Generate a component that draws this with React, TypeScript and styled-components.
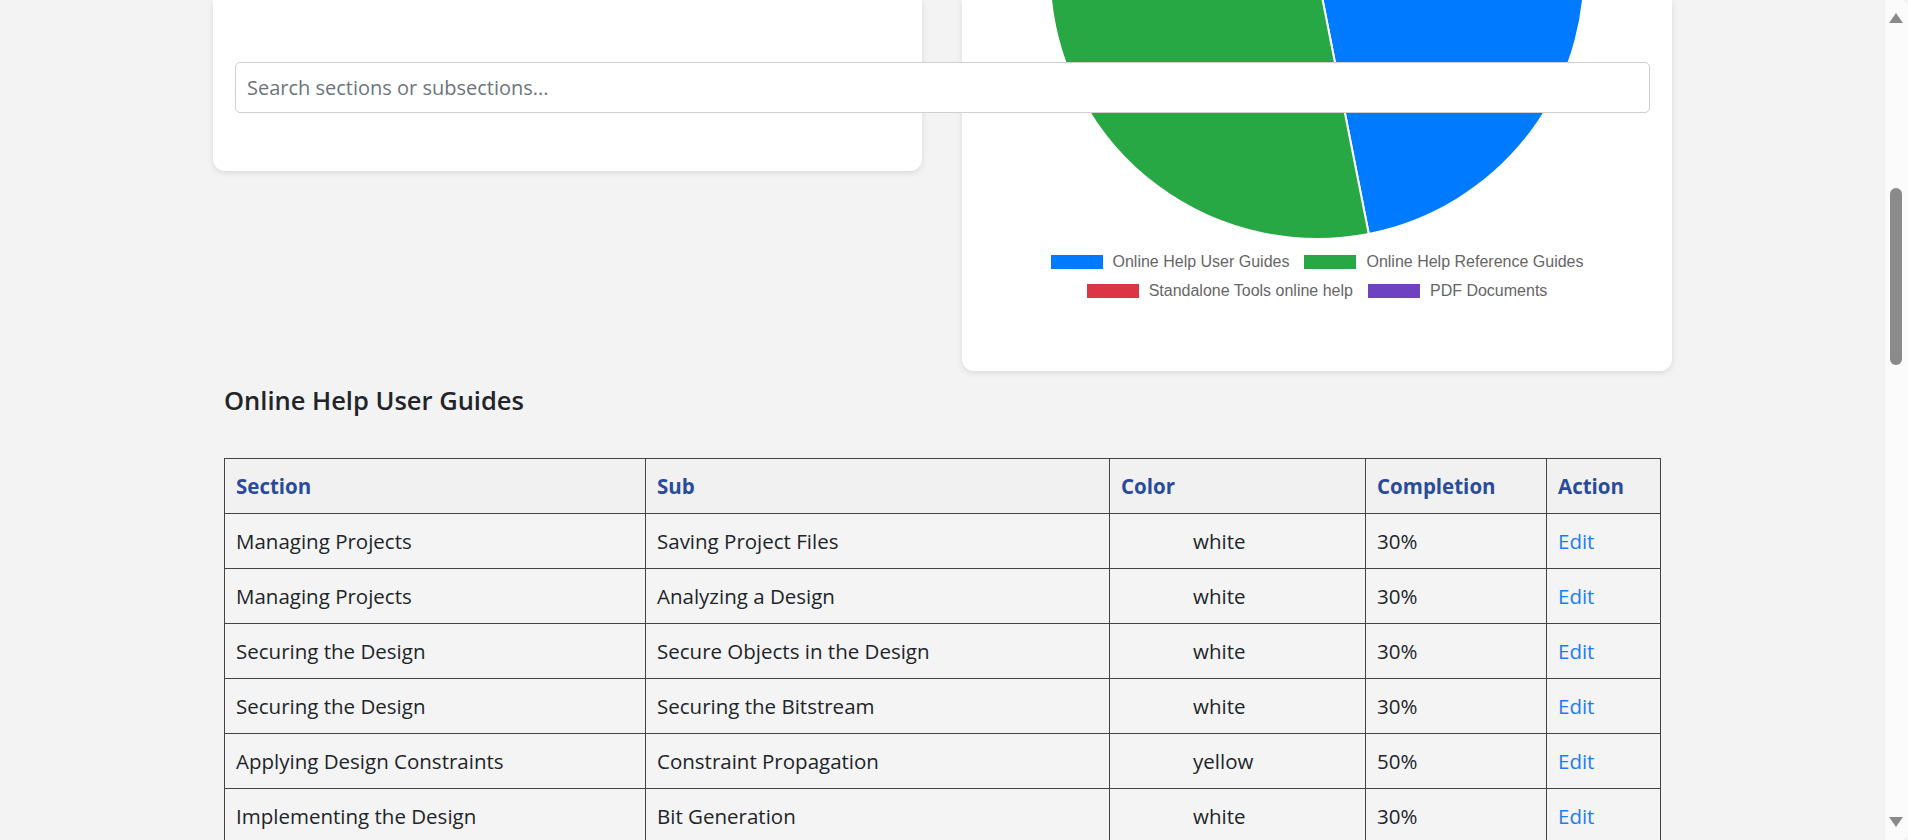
import React from "react";
import styled, { createGlobalStyle } from "styled-components";

const GlobalStyle = createGlobalStyle`
  html, body {
    margin: 0;
    padding: 0;
    overflow: hidden;
    background: #f3f3f3;
  }
  body {
    font-family: "Open Sans", "Noto Sans", sans-serif;
    color: #212529;
  }
`;

const categories = [
  { label: "Online Help User Guides", color: "#007bff", value: 46.9 },
  { label: "Online Help Reference Guides", color: "#28a745", value: 53.1 },
  { label: "Standalone Tools online help", color: "#dc3545", value: 0 },
  { label: "PDF Documents", color: "#6f42c1", value: 0 },
];

const rows = [
  { section: "Managing Projects", sub: "Saving Project Files", color: "white", completion: "30%" },
  { section: "Managing Projects", sub: "Analyzing a Design", color: "white", completion: "30%" },
  { section: "Securing the Design", sub: "Secure Objects in the Design", color: "white", completion: "30%" },
  { section: "Securing the Design", sub: "Securing the Bitstream", color: "white", completion: "30%" },
  { section: "Applying Design Constraints", sub: "Constraint Propagation", color: "yellow", completion: "50%" },
  { section: "Implementing the Design", sub: "Bit Generation", color: "white", completion: "30%" },
  { section: "Implementing the Design", sub: "Place and Route", color: "white", completion: "30%" },
];

// pie geometry (lower part of the chart, the top is scrolled away)
const CX = 268;
const CY = -28.5;
const R = 267.5;

function slicePath(startFrac: number, endFrac: number) {
  const a0 = -Math.PI / 2 + startFrac * 2 * Math.PI;
  const a1 = -Math.PI / 2 + endFrac * 2 * Math.PI;
  const x0 = CX + R * Math.cos(a0);
  const y0 = CY + R * Math.sin(a0);
  const x1 = CX + R * Math.cos(a1);
  const y1 = CY + R * Math.sin(a1);
  const large = endFrac - startFrac > 0.5 ? 1 : 0;
  return `M ${CX} ${CY} L ${x0} ${y0} A ${R} ${R} 0 ${large} 1 ${x1} ${y1} Z`;
}

function PieChart() {
  const total = categories.reduce((s, c) => s + c.value, 0);
  let acc = 0;
  return (
    <PieSvg viewBox="0 0 536 242" width="536" height="242">
      {categories
        .filter((c) => c.value > 0)
        .map((c) => {
          const start = acc / total;
          acc += c.value;
          const end = acc / total;
          return <path key={c.label} d={slicePath(start, end)} fill={c.color} stroke="#fff" strokeWidth="2" />;
        })}
    </PieSvg>
  );
}

export default function App() {
  return (
    <>
      <GlobalStyle />
      <Page>
        <Container>
          <CardsRow>
            <SearchCard>
              <SearchInput type="text" placeholder="Search sections or subsections..." />
            </SearchCard>
            <ChartCard>
              <PieChart />
              <Legend>
                <LegendRow>
                  {categories.slice(0, 2).map((c) => (
                    <LegendItem key={c.label}>
                      <LegendBox $color={c.color} />
                      {c.label}
                    </LegendItem>
                  ))}
                </LegendRow>
                <LegendRow>
                  {categories.slice(2).map((c) => (
                    <LegendItem key={c.label}>
                      <LegendBox $color={c.color} />
                      {c.label}
                    </LegendItem>
                  ))}
                </LegendRow>
              </Legend>
            </ChartCard>
          </CardsRow>

          <Section>
            <SectionTitle>Online Help User Guides</SectionTitle>
            <Table>
              <colgroup>
                <col style={{ width: 421 }} />
                <col style={{ width: 464 }} />
                <col style={{ width: 256 }} />
                <col style={{ width: 181 }} />
                <col style={{ width: 114 }} />
              </colgroup>
              <thead>
                <tr>
                  <Th>Section</Th>
                  <Th>Sub</Th>
                  <Th>Color</Th>
                  <Th>Completion</Th>
                  <Th>Action</Th>
                </tr>
              </thead>
              <tbody>
                {rows.map((r, i) => (
                  <tr key={i}>
                    <Td>{r.section}</Td>
                    <Td>{r.sub}</Td>
                    <Td>
                      <Swatch />
                      {r.color}
                    </Td>
                    <Td>{r.completion}</Td>
                    <Td>
                      <EditLink href="#">Edit</EditLink>
                    </Td>
                  </tr>
                ))}
              </tbody>
            </Table>
          </Section>
        </Container>
      </Page>
      <ScrollBar>
        <ArrowUp />
        <Thumb />
        <ArrowDown />
      </ScrollBar>
    </>
  );
}

const Page = styled.div`
  padding-right: 23px;
  min-height: 100vh;
`;

const Container = styled.div`
  width: 1459px;
  margin: 0 auto;
`;

const CardsRow = styled.div`
  display: flex;
  align-items: flex-start;
  gap: 40px;
`;

const Card = styled.div`
  flex: 0 0 709px;
  min-width: 0;
  background: #fff;
  border-radius: 0 0 12px 12px;
  box-shadow: 0 2px 6px rgba(0, 0, 0, 0.1);
  box-sizing: border-box;
`;

const SearchCard = styled(Card)`
  padding: 62px 22px 58px;
`;

const SearchInput = styled.input`
  position: relative;
  z-index: 1;
  display: block;
  width: 1415px;
  height: 51px;
  box-sizing: border-box;
  padding: 0 11px;
  font-family: "Open Sans", "Noto Sans", sans-serif;
  font-size: 20px;
  color: #212529;
  background: #fff;
  border: 1px solid #cfcfcf;
  border-radius: 5px;
  outline: none;

  &::placeholder {
    color: #6c757d;
  }
`;

const ChartCard = styled(Card)`
  flex-basis: 710px;
  display: flex;
  flex-direction: column;
  align-items: center;
  padding-bottom: 66px;
`;

const PieSvg = styled.svg`
  display: block;
  overflow: visible;
`;

const Legend = styled.div`
  margin-top: 5px;
  display: flex;
  flex-direction: column;
  align-items: center;
`;

const LegendRow = styled.div`
  display: flex;
  gap: 15px;
  height: 29px;
  align-items: center;
`;

const LegendItem = styled.div`
  display: flex;
  align-items: center;
  gap: 10px;
  font-family: "Liberation Sans", Arial, sans-serif;
  font-size: 16px;
  color: #666;
`;

const LegendBox = styled.span<{ $color: string }>`
  display: inline-block;
  width: 52px;
  height: 14px;
  background: ${(p) => p.$color};
`;

const Section = styled.div`
  padding: 0 11px;
`;

const SectionTitle = styled.h2`
  margin: 14px 0 43px;
  font-size: 25.5px;
  font-weight: 600;
  line-height: 30px;
  color: #212529;
`;

const Table = styled.table`
  width: 1436px;
  table-layout: fixed;
  border-collapse: collapse;
  font-size: 20.5px;
`;

const Th = styled.th`
  text-align: left;
  padding: 12px 10px 12px 11px;
  line-height: 30px;
  font-weight: 700;
  color: #2a4b9b;
  background: #f1f1f1;
  border: 1px solid #444;
`;

const Td = styled.td`
  padding: 12px 10px 12px 11px;
  line-height: 30px;
  color: #212529;
  background: #f4f4f4;
  border: 1px solid #444;
  white-space: nowrap;
`;

const Swatch = styled.span`
  display: inline-block;
  width: 72px;
`;

const EditLink = styled.a`
  color: #1a7cf7;
  text-decoration: none;
`;

const ScrollBar = styled.div`
  position: fixed;
  top: 0;
  right: 0;
  bottom: 0;
  width: 23px;
  background: #fbfbfb;
  border-left: 1px solid #efefef;
  border-radius: 0 8px 8px 0;
`;

const ArrowUp = styled.div`
  position: absolute;
  top: 13px;
  left: 4px;
  width: 0;
  height: 0;
  border-left: 7px solid transparent;
  border-right: 7px solid transparent;
  border-bottom: 10px solid #8a8a8a;
`;

const ArrowDown = styled.div`
  position: absolute;
  bottom: 13px;
  left: 4px;
  width: 0;
  height: 0;
  border-left: 7px solid transparent;
  border-right: 7px solid transparent;
  border-top: 10px solid #8a8a8a;
`;

const Thumb = styled.div`
  position: absolute;
  top: 188px;
  left: 5px;
  width: 12px;
  height: 177px;
  border-radius: 6px;
  background: #8a8a8a;
`;
